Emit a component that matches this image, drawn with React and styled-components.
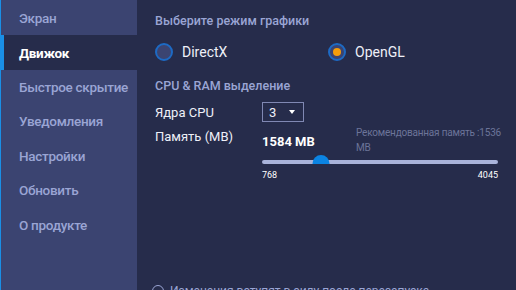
import React, { useState } from "react";
import styled, { createGlobalStyle } from "styled-components";

const GlobalStyle = createGlobalStyle`
  html, body {
    margin: 0;
    padding: 0;
    width: 516px;
    height: 290px;
    overflow: hidden;
    background: #262c4b;
    font-family: Roboto, "Noto Sans", sans-serif;
  }
`;

const Layout = styled.div`
  display: flex;
  width: 516px;
  height: 290px;
`;

const Sidebar = styled.nav`
  width: 137px;
  flex-shrink: 0;
  background: #3b4471;
  border-left: 1px solid #1a8fe6;
  padding-top: 1px;
  box-sizing: border-box;
`;

const NavItem = styled.div`
  position: relative;
  height: 34.4px;
  display: flex;
  align-items: center;
  padding-left: 18px;
  font-size: 13.5px;
  letter-spacing: -0.3px;
  font-weight: ${(p) => (p.$active ? 700 : 500)};
  white-space: nowrap;
  color: ${(p) => (p.$active ? "#ffffff" : "#9aa5d4")};
  background: ${(p) => (p.$active ? "#262c4b" : "transparent")};
`;

const ActiveMark = styled.span`
  position: absolute;
  left: -1px;
  top: 0;
  bottom: 0;
  width: 4px;
  background: #1a8fe6;
`;

const Main = styled.main`
  flex: 1;
  padding: 13px 0 0 18px;
  color: #e9ecf7;
  position: relative;
`;

const SectionTitle = styled.div`
  font-size: 12.5px;
  font-weight: 500;
  color: #9aa5d4;
  margin-top: ${(p) => p.$top || 0}px;
`;

const RadioRow = styled.div`
  display: flex;
  align-items: center;
  margin-top: 14px;
  height: 20px;
`;

const RadioOption = styled.label`
  display: flex;
  align-items: center;
  gap: 9px;
  width: 173px;
  font-size: 14px;
  color: #eef0f8;
  cursor: pointer;
`;

const RadioCircle = styled.span`
  width: 14px;
  height: 14px;
  border-radius: 50%;
  border: 2px solid #1d6ac4;
  background: #3b4471;
  display: flex;
  align-items: center;
  justify-content: center;

  &::after {
    content: "";
    width: 8px;
    height: 8px;
    border-radius: 50%;
    background: ${(p) => (p.$checked ? "#f59d0a" : "transparent")};
  }
`;

const Grid = styled.div`
  display: grid;
  grid-template-columns: 107px 1fr;
  row-gap: 3px;
  margin-top: 9px;
  font-size: 13px;
  color: #eef0f8;
`;

const Label = styled.div`
  display: flex;
  align-items: ${(p) => (p.$top ? "flex-start" : "center")};
  padding-top: ${(p) => (p.$top ? 4 : 0)}px;
`;

const Select = styled.div`
  width: 42px;
  height: 20px;
  box-sizing: border-box;
  border: 1px solid #8088b3;
  display: flex;
  align-items: center;
  justify-content: space-between;
  padding: 0 8px 0 6px;
  font-size: 13px;
  color: #eef0f8;
`;

const Caret = styled.span`
  width: 0;
  height: 0;
  border-left: 3.5px solid transparent;
  border-right: 3.5px solid transparent;
  border-top: 4px solid #ffffff;
`;

const MemoryBox = styled.div`
  width: 236px;
`;

const MemoryHead = styled.div`
  display: flex;
  justify-content: space-between;
  align-items: flex-start;
`;

const MemoryValue = styled.div`
  font-size: 13px;
  font-weight: 700;
  color: #ffffff;
  margin-top: 9px;
`;

const Hint = styled.div`
  width: 142px;
  font-size: 10px;
  letter-spacing: -0.2px;
  line-height: 15px;
  color: #6c7499;
`;

const NoWrap = styled.span`
  white-space: nowrap;
`;

const Track = styled.div`
  position: relative;
  height: 4px;
  border-radius: 2px;
  background: #a9b3da;
  margin-top: 5px;
`;

const Thumb = styled.span`
  position: absolute;
  top: -5px;
  width: 17px;
  height: 9px;
  border-radius: 9px 9px 0 0;
  background: #0b84e3;
  transform: translateX(-50%);
`;

const Scale = styled.div`
  display: flex;
  justify-content: space-between;
  font-size: 9px;
  color: #ffffff;
  margin-top: 6px;
`;

const Footer = styled.div`
  position: absolute;
  left: 15px;
  top: 284px;
  display: flex;
  align-items: center;
  gap: 6px;
  font-size: 12px;
  color: #9aa5d4;
`;

const InfoIcon = styled.span`
  width: 10px;
  height: 10px;
  border-radius: 50%;
  border: 1px solid #9aa5d4;
`;

const items = [
  "Экран",
  "Движок",
  "Быстрое скрытие",
  "Уведомления",
  "Настройки",
  "Обновить",
  "О продукте",
];

const App = () => {
  const [mode, setMode] = useState("opengl");
  const min = 768;
  const max = 4045;
  const mem = 1584;
  const pct = ((mem - min) / (max - min)) * 100;

  return (
    <>
      <GlobalStyle />
      <Layout>
        <Sidebar>
          {items.map((item) => (
            <NavItem key={item} $active={item === "Движок"}>
              {item === "Движок" && <ActiveMark />}
              {item}
            </NavItem>
          ))}
        </Sidebar>
        <Main>
          <SectionTitle>Выберите режим графики</SectionTitle>
          <RadioRow>
            <RadioOption onClick={() => setMode("directx")}>
              <RadioCircle $checked={mode === "directx"} />
              DirectX
            </RadioOption>
            <RadioOption onClick={() => setMode("opengl")}>
              <RadioCircle $checked={mode === "opengl"} />
              OpenGL
            </RadioOption>
          </RadioRow>
          <SectionTitle $top={16}>CPU &amp; RAM выделение</SectionTitle>
          <Grid>
            <Label>Ядра CPU</Label>
            <Select>
              3
              <Caret />
            </Select>
            <Label $top>Память (MB)</Label>
            <MemoryBox>
              <MemoryHead>
                <MemoryValue>1584 MB</MemoryValue>
                <Hint>
                  <NoWrap>Рекомендованная память :1536</NoWrap> MB
                </Hint>
              </MemoryHead>
              <Track>
                <Thumb style={{ left: `${pct}%` }} />
              </Track>
              <Scale>
                <span>768</span>
                <span>4045</span>
              </Scale>
            </MemoryBox>
          </Grid>
          <Footer>
            <InfoIcon />
            Изменения вступят в силу после перезапуска
          </Footer>
        </Main>
      </Layout>
    </>
  );
};

export default App;
